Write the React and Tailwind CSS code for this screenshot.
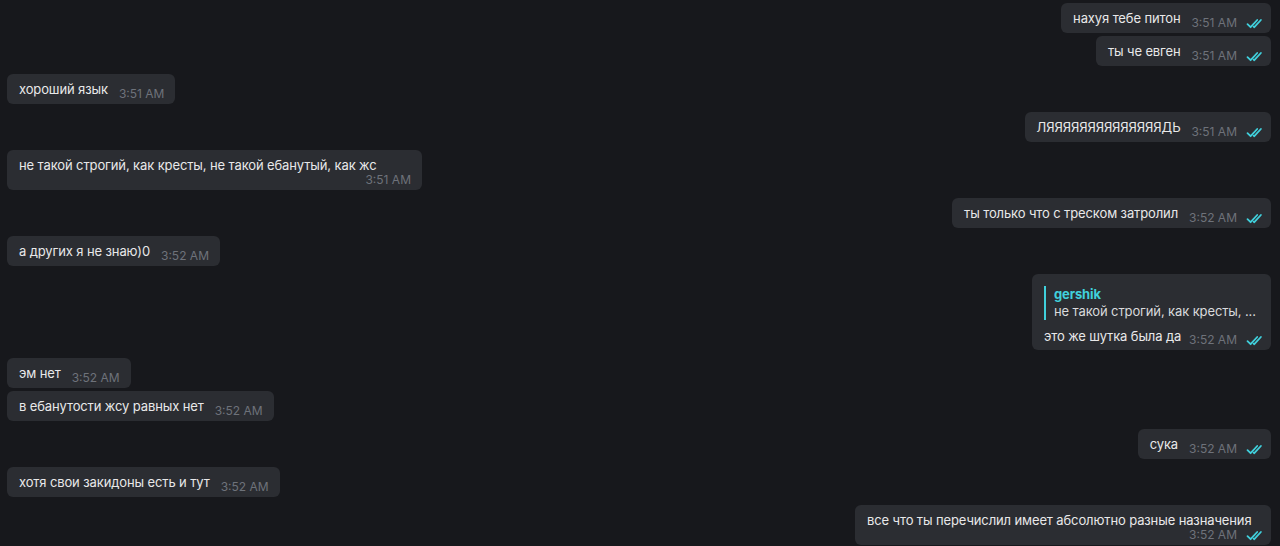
import React from 'react';

const messages = [
  { out: true, text: 'нахуя тебе питон', time: '3:51 AM' },
  { out: true, text: 'ты че евген', time: '3:51 AM', same: true },
  { out: false, text: 'хороший язык', time: '3:51 AM' },
  { out: true, text: 'ЛЯЯЯЯЯЯЯЯЯЯЯЯЯЯДЬ', time: '3:51 AM' },
  { out: false, text: 'не такой строгий, как кресты, не такой ебанутый, как жс', time: '3:51 AM', wide: 'w-[415px]' },
  { out: true, text: 'ты только что с треском затролил', time: '3:52 AM' },
  { out: false, text: 'а других я не знаю)0', time: '3:52 AM' },
  {
    out: true,
    text: 'это же шутка была да',
    time: '3:52 AM',
    reply: { name: 'gershik', text: 'не такой строгий, как кресты, ...' },
  },
  { out: false, text: 'эм нет', time: '3:52 AM' },
  { out: false, text: 'в ебанутости жсу равных нет', time: '3:52 AM', same: true },
  { out: true, text: 'сука', time: '3:52 AM' },
  { out: false, text: 'хотя свои закидоны есть и тут', time: '3:52 AM' },
  { out: true, text: 'все что ты перечислил имеет абсолютно разные назначения', time: '3:52 AM', wide: 'w-[416px]' },
];

const Checks = () => (
  <svg width="17" height="11" viewBox="0 0 17 11" fill="none" className="shrink-0">
    <path d="M1.5 6.2 L4.6 9.2 L11.2 2" stroke="#40d0dc" strokeWidth="1.8" strokeLinecap="round" strokeLinejoin="round" />
    <path d="M7.6 8.6 L8.3 9.2 L14.9 2" stroke="#40d0dc" strokeWidth="1.8" strokeLinecap="round" strokeLinejoin="round" />
  </svg>
);

const Stamp = ({ time, out }) => (
  <span className="flex items-center gap-[9px] text-[12px] leading-[16px] text-[#6e727a] whitespace-nowrap">
    {time}
    {out && <Checks />}
  </span>
);

const Bubble = ({ m }) => {
  const side = m.out ? 'self-end' : 'self-start';
  const pad = m.out ? 'pl-3 pr-[8px]' : 'pl-3 pr-[11px]';

  if (m.reply) {
    return (
      <div className={`${side} ${pad} bg-[#2b2d32] rounded-[6px] pt-3 pb-[2px] w-[239px]`}>
        <div className="border-l-2 border-[#40d0dc] pl-2 text-[13px] leading-[17px] tracking-[-0.12px]">
          <div className="font-bold text-[#40d0dc]">{m.reply.name}</div>
          <div className="text-[#d9dadc] whitespace-nowrap">{m.reply.text}</div>
        </div>
        <div className="flex items-end justify-between mt-[7px]">
          <span className="text-[13px] leading-[18px] mb-[3px] text-[#e8e8e9] tracking-[-0.12px]">{m.text}</span>
          <Stamp time={m.time} out={m.out} />
        </div>
      </div>
    );
  }

  if (m.wide) {
    return (
      <div className={`${side} ${pad} ${m.wide} bg-[#2b2d32] rounded-[6px] pt-[6px] pb-[2px] flex flex-col h-[40px]`}>
        <span className="text-[13px] leading-[18px] text-[#e8e8e9] whitespace-nowrap tracking-[-0.12px]">{m.text}</span>
        <span className="self-end -mt-[2px]">
          <Stamp time={m.time} out={m.out} />
        </span>
      </div>
    );
  }

  return (
    <div className={`${side} ${pad} bg-[#2b2d32] rounded-[6px] pt-[6px] pb-[2px] h-[30px] flex items-end gap-[11px]`}>
      <span className="text-[13px] leading-[18px] mb-[4px] text-[#e8e8e9] whitespace-nowrap tracking-[-0.12px]">{m.text}</span>
      <Stamp time={m.time} out={m.out} />
    </div>
  );
};

export default function App() {
  return (
    <div
      className="w-[1280px] h-[546px] overflow-hidden bg-[#17181c] flex flex-col pt-[3px] pl-[7px] pr-[9px]"
      style={{ fontFamily: 'Inter, "Noto Sans", sans-serif' }}
    >
      {messages.map((m, i) => (
        <div key={i} className={`flex flex-col ${i === 0 ? '' : m.same ? 'mt-[3px]' : 'mt-[8px]'}`}>
          <Bubble m={m} />
        </div>
      ))}
    </div>
  );
}
